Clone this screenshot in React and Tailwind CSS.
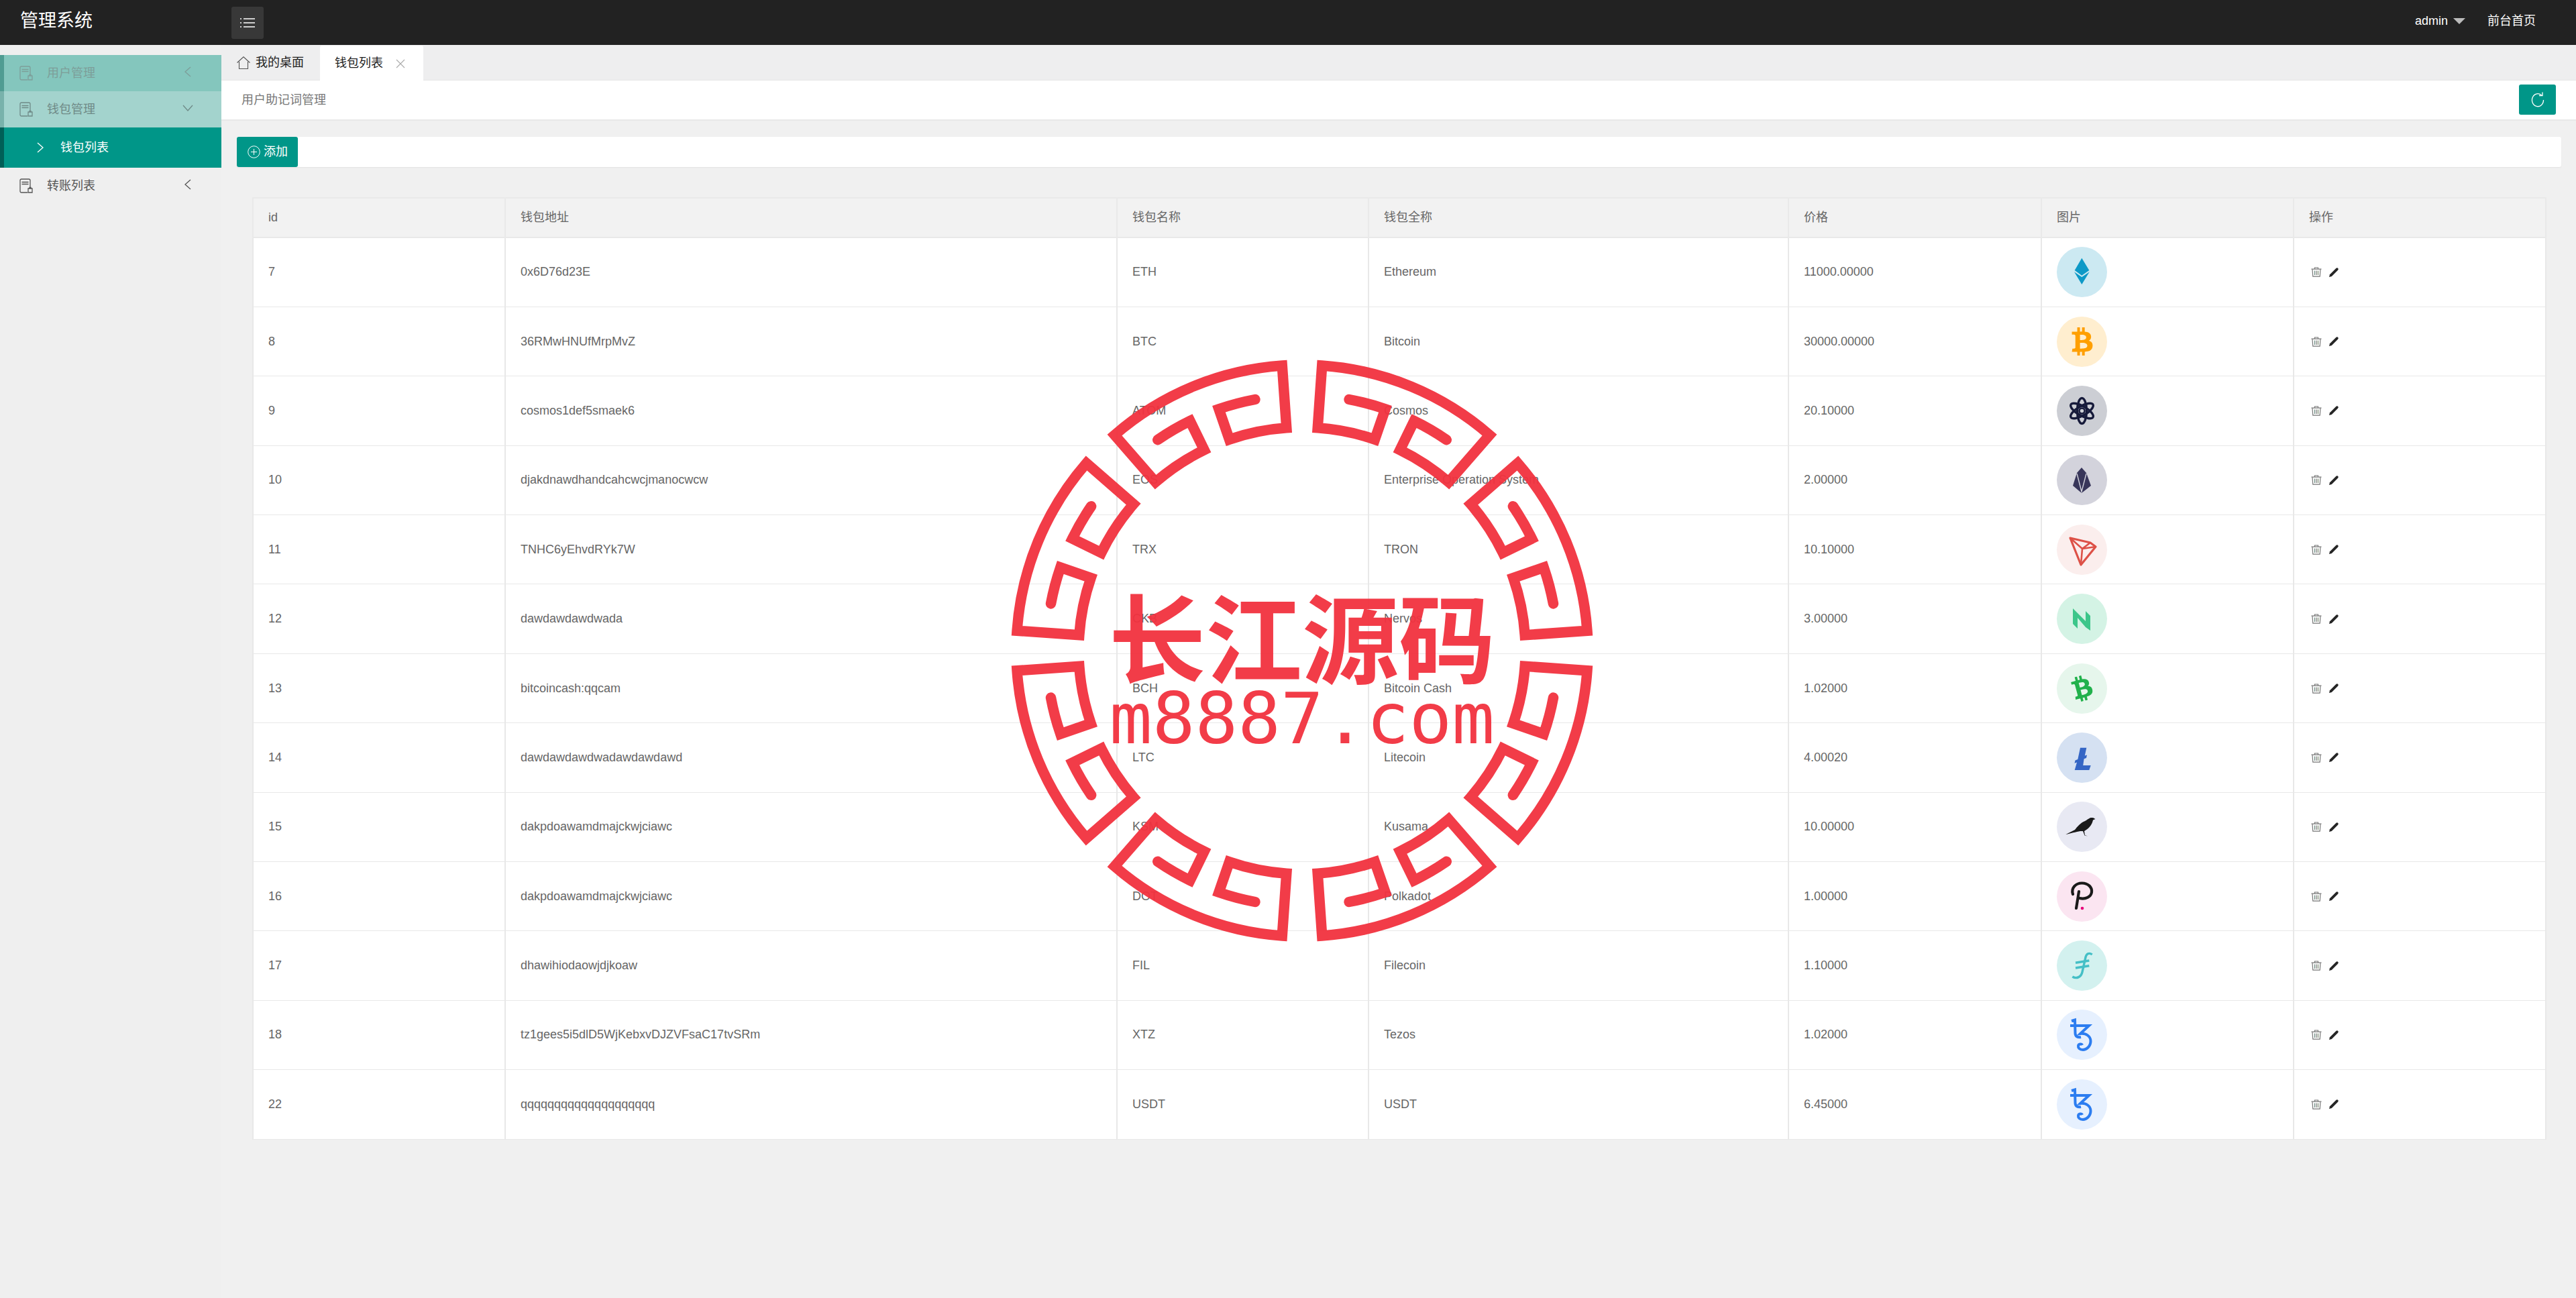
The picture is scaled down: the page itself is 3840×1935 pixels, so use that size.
import React from 'react';
import { FaBtc } from 'react-icons/fa';

const FONT = "font-['Liberation_Sans','Noto_Sans_CJK_SC',sans-serif]";

function CoinGlyph({ name }) {
  switch (name) {
    case 'ETH':
      return (
        <svg viewBox="0 0 75 75" className="w-full h-full">
          <path d="M37.3 16.7 48.3 35 37.3 42.7 26.7 35Z" fill="#0d99c7" />
          <path d="M26 37.3 37.3 45 48.7 37.3 37.3 56Z" fill="#0d99c7" />
        </svg>
      );
    case 'ATOM':
      return (
        <svg viewBox="0 0 75 75" className="w-full h-full" fill="none" stroke="#161a3a" strokeWidth="3.4">
          <ellipse cx="37.5" cy="37.5" rx="7" ry="19" />
          <ellipse cx="37.5" cy="37.5" rx="7" ry="19" transform="rotate(60 37.5 37.5)" />
          <ellipse cx="37.5" cy="37.5" rx="7" ry="19" transform="rotate(-60 37.5 37.5)" />
          <circle cx="37.5" cy="37.5" r="4" fill="#ccced4" strokeWidth="2.5" />
        </svg>
      );
    case 'EOS':
      return (
        <svg viewBox="0 0 75 75" className="w-full h-full">
          <path d="M37 19 44 27 51 46 37 57 24 46 30 27Z" fill="#38365a" />
          <path d="M30 28 37 55 44 28" fill="none" stroke="#d3d3dc" strokeWidth="1.4" />
        </svg>
      );
    case 'TRX':
      return (
        <svg viewBox="0 0 75 75" className="w-full h-full" fill="none" stroke="#dd5147" strokeWidth="3.2" strokeLinejoin="round">
          <path d="M20 20 50 27 58 33 36 60Z" />
          <path d="M20 20 38 36 36 60M38 36 50 27M38 36 58 33" strokeWidth="2.6" />
        </svg>
      );
    case 'CKB':
      return (
        <svg viewBox="0 0 75 75" className="w-full h-full">
          <path d="M24 22 24 45 31 52 31 36 43 50 50 55 50 33 43 26 43 41Z" fill="#3cc68a" />
        </svg>
      );
    case 'LTC':
      return (
        <svg viewBox="0 0 75 75" className="w-full h-full">
          <path d="M35 22.7 44.3 22.7 41.8 34.5 45 33.5 44 38 40.6 39.3 39.2 49 50.7 49 48.3 56 26.7 56 30 44.5 26.5 45.8 27.5 41.5 31.3 40Z" fill="#3566c5" />
        </svg>
      );
    case 'KSM':
      return (
        <svg viewBox="0 0 75 75" className="w-full h-full">
          <path d="M13.3 49 27 42C30 38 36 31 42 29 47 26 49 24 52 24 55 23.5 56 25 57.5 26L54 27.5C53 33 49 39 44 42L41 44 42 50 46 51.5 41.5 50.5 39 44 35 44C29 45 20 47.5 13.3 49Z" fill="#1a1a1a" />
        </svg>
      );
    case 'DOT':
      return (
        <svg viewBox="0 0 75 75" className="w-full h-full" fill="none" stroke="#1a1a1a" strokeWidth="4.2" strokeLinecap="round">
          <path d="M24 34C21 25 28 17.5 37.5 17.5 47 17.5 53 24 52 31 51 38 43 42 34 40" />
          <path d="M33 30 29 55" />
          <circle cx="38" cy="55" r="2.3" fill="#e6007a" stroke="none" />
        </svg>
      );
    case 'FIL':
      return (
        <svg viewBox="0 0 75 75" className="w-full h-full" fill="none" stroke="#45bfc6" strokeWidth="3.4">
          <path d="M52.7 21C48 17.5 44 20 43 25L38 47C36.5 54 30 58 23.3 54" />
          <path d="M28 33.3 48.3 30M28 41 48.3 37.7" />
        </svg>
      );
    case 'XTZ':
      return (
        <svg viewBox="0 0 75 75" className="w-full h-full" fill="none" stroke="#2c7df0" strokeWidth="4">
          <path d="M22 17 27 15.5 27.5 35C27.5 40 31 42 36 41" />
          <path d="M20 24H48L35 36C44 35 50.5 40 50.5 47 50.5 55 44 60 39 60 34 60 31.5 57 32 54 32.5 51 37 50.5 38 53" />
        </svg>
      );
    case 'BTC':
      return (
        <div className="w-full h-full flex items-center justify-center">
          <FaBtc size={42} color="#ff9f00" />
        </div>
      );
    case 'BCH':
      return (
        <div className="w-full h-full flex items-center justify-center">
          <FaBtc size={38} color="#22b14c" className="-rotate-[15deg]" />
        </div>
      );
    default:
      return null;
  }
}

const rows = [
  { id: 7, addr: '0x6D76d23E', sym: 'ETH', name: 'Ethereum', price: '11000.00000', bg: 'bg-[#cce9f2]' },
  { id: 8, addr: '36RMwHNUfMrpMvZ', sym: 'BTC', name: 'Bitcoin', price: '30000.00000', bg: 'bg-[#ffeecf]' },
  { id: 9, addr: 'cosmos1def5smaek6', sym: 'ATOM', name: 'Cosmos', price: '20.10000', bg: 'bg-[#ccced4]' },
  { id: 10, addr: 'djakdnawdhandcahcwcjmanocwcw', sym: 'EOS', name: 'Enterprise Operation System', price: '2.00000', bg: 'bg-[#d3d3dc]' },
  { id: 11, addr: 'TNHC6yEhvdRYk7W', sym: 'TRX', name: 'TRON', price: '10.10000', bg: 'bg-[#fbeeed]' },
  { id: 12, addr: 'dawdawdawdwada', sym: 'CKB', name: 'Nervos', price: '3.00000', bg: 'bg-[#d4f3e5]' },
  { id: 13, addr: 'bitcoincash:qqcam', sym: 'BCH', name: 'Bitcoin Cash', price: '1.02000', bg: 'bg-[#e6f6ec]' },
  { id: 14, addr: 'dawdawdawdwadawdawdawd', sym: 'LTC', name: 'Litecoin', price: '4.00020', bg: 'bg-[#d5e1f2]' },
  { id: 15, addr: 'dakpdoawamdmajckwjciawc', sym: 'KSM', name: 'Kusama', price: '10.00000', bg: 'bg-[#e8e9f3]' },
  { id: 16, addr: 'dakpdoawamdmajckwjciawc', sym: 'DOT', name: 'Polkadot', price: '1.00000', bg: 'bg-[#fbe5f1]' },
  { id: 17, addr: 'dhawihiodaowjdjkoaw', sym: 'FIL', name: 'Filecoin', price: '1.10000', bg: 'bg-[#d3f1ef]' },
  { id: 18, addr: 'tz1gees5i5dlD5WjKebxvDJZVFsaC17tvSRm', sym: 'XTZ', name: 'Tezos', price: '1.02000', bg: 'bg-[#e6f0fe]' },
  { id: 22, addr: 'qqqqqqqqqqqqqqqqqqqq', sym: 'USDT', glyph: 'XTZ', name: 'USDT', price: '6.45000', bg: 'bg-[#e6f0fe]' },
];

const columns = [
  { label: 'id', w: 'w-[376px]' },
  { label: '钱包地址', w: 'w-[912px]' },
  { label: '钱包名称', w: 'w-[375px]' },
  { label: '钱包全称', w: 'w-[626px]' },
  { label: '价格', w: 'w-[377px]' },
  { label: '图片', w: 'w-[376px]' },
  { label: '操作', w: 'w-[376px]' },
];

const TrashIcon = () => (
  <svg width="16" height="15" viewBox="0 0 16 15" fill="none">
    <path d="M0.5 3.2H15.5M5.5 3V1H10.5V3" stroke="#777" strokeWidth="1.2" />
    <path d="M2 3.5 2.8 14.2H13.2L14 3.5" stroke="#777" strokeWidth="1.2" />
    <path d="M5.5 5.5V12" stroke="#6b8a80" strokeWidth="1.2" />
    <path d="M8 5.5V12" stroke="#777" strokeWidth="1.2" />
    <path d="M10.5 5.5V12" stroke="#7a8a70" strokeWidth="1.2" />
  </svg>
);

const PencilIcon = () => (
  <svg width="14" height="14" viewBox="0 0 14 14">
    <path d="M0 14 1 10.2 10 1.2 12 0 14 2 12.8 4 3.8 13Z" fill="#262626" />
  </svg>
);

const DocIcon = ({ color }) => (
  <svg width="20" height="22" viewBox="0 0 20 22" fill="none" stroke={color} strokeWidth="1.3">
    <path d="M12 21H3C1.8 21 1 20.2 1 19V3C1 1.8 1.8 1 3 1H14C15.2 1 16 1.8 16 3V13" />
    <path d="M3.5 5.5H13.5M3.5 8.5H13.5" />
    <path d="M13 15H19V21H13ZM15 15V13.5H17V15" />
  </svg>
);

const Chevron = ({ dir, color }) => {
  if (dir === 'down') {
    return (
      <svg width="16" height="10" viewBox="0 0 16 10" fill="none" stroke={color} strokeWidth="1.3">
        <path d="M1 1 8 9 15 1" />
      </svg>
    );
  }
  return (
    <svg width="10" height="16" viewBox="0 0 10 16" fill="none" stroke={color} strokeWidth="1.3">
      <path d={dir === 'left' ? 'M9 1 1 8 9 15' : 'M1 1 9 8 1 15'} />
    </svg>
  );
};

function SideItem({ label, chevron, rowClass, barClass, textClass, iconColor, chevronColor }) {
  return (
    <div className={`h-[54px] flex items-center ${rowClass}`}>
      <div className={`w-[6px] h-full shrink-0 ${barClass}`} />
      <div className="ml-[23px] w-[20px] shrink-0 flex">
        <DocIcon color={iconColor} />
      </div>
      <span className={`ml-[21px] text-[18px] ${textClass}`}>{label}</span>
      <div className="ml-auto mr-[25px] w-[50px] flex justify-center -translate-y-[2px]">
        <Chevron dir={chevron} color={chevronColor} />
      </div>
    </div>
  );
}

// one key-pattern piece of the stamp ring, built from polar points
function polar(r, deg) {
  const a = ((deg - 90) * Math.PI) / 180;
  return `${(434 + r * Math.cos(a)).toFixed(2)} ${(434 + r * Math.sin(a)).toFixed(2)}`;
}

function ringPiece(c) {
  const R1 = 426;
  const R2 = 381;
  const R3 = 333;
  const arc = (r, from, to) => `A${r} ${r} 0 0 ${to > from ? 1 : 0} ${polar(r, c + to)}`;
  return [
    `M${polar(R2, c + 11.9)}`,
    arc(R2, 11.9, 3.5),
    `L${polar(R3, c + 3.5)}`,
    arc(R3, 3.5, 18.5),
    `L${polar(R1, c + 18.5)}`,
    arc(R1, 18.5, -18.5),
    `L${polar(R3, c - 18.5)}`,
    arc(R3, -18.5, -3.5),
    `L${polar(R2, c - 3.5)}`,
    arc(R2, -3.5, -11.9),
  ].join(' ');
}

const ringCentres = [22.5, 67.5, 112.5, 157.5, 202.5, 247.5, 292.5, 337.5];

function Stamp() {
  return (
    <div className="absolute left-[1507px] top-[536px] w-[868px] h-[868px] pointer-events-none opacity-95">
      <svg width="868" height="868" viewBox="0 0 868 868" fill="none" stroke="#f2323f" strokeWidth="15.5" strokeLinejoin="miter" strokeLinecap="round">
        {ringCentres.map((c) => (
          <path key={c} d={ringPiece(c)} />
        ))}
      </svg>
      <div className="absolute inset-x-0 top-[324px] flex justify-center text-[#f2323f] text-[144px] leading-[170px] font-bold font-['Noto_Sans_CJK_SC',sans-serif]">
        长江源码
      </div>
      <div className="absolute inset-x-0 top-[474px] flex justify-center text-[#f2323f] text-[106px] leading-[124px] font-['DejaVu_Sans_Mono',monospace]">
        m8887.com
      </div>
    </div>
  );
}

export default function App() {
  return (
    <div className={`relative w-full h-[1935px] overflow-hidden flex flex-col bg-[#f0f0f0] text-[18px] ${FONT}`}>
      {/* Top bar */}
      <header className="h-[67px] shrink-0 bg-[#222222] flex items-center text-white">
        <div className="w-[345px] pl-[30px] text-[27px] leading-none -translate-y-[2px]">管理系统</div>
        <button className="w-[48px] h-[48px] rounded-[3px] bg-[#383838] flex items-center justify-center">
          <svg width="22" height="14" viewBox="0 0 22 14" fill="none" stroke="white" strokeWidth="1.6">
            <path d="M0 1H2M5 1H22M0 7H2M5 7H22M0 13H2M5 13H22" />
          </svg>
        </button>
        <div className="ml-auto flex items-center pr-[60px] -translate-y-[2px]">
          <span>admin</span>
          <span className="ml-[8px] w-0 h-0 border-x-[9px] border-x-transparent border-t-[9px] border-t-[#bbbbbb]" />
          <span className="ml-[33px]">前台首页</span>
        </div>
      </header>

      <div className="flex flex-1 min-h-0">
        {/* Sidebar */}
        <aside className="w-[330px] shrink-0 pt-[15px] bg-[#efefef]">
          <SideItem label="用户管理" chevron="left" rowClass="bg-[#84c6bd]" barClass="bg-[#4f9c92]" textClass="text-[#7d9e99]" iconColor="#7d9e99" chevronColor="#7d9e99" />
          <SideItem label="钱包管理" chevron="down" rowClass="bg-[#a3d3cd]" barClass="bg-[#78b2ab]" textClass="text-[#6f8a87]" iconColor="#6f8a87" chevronColor="#6f8a87" />
          <div className="h-[60px] flex items-center bg-[#009688] text-white">
            <div className="w-[6px] h-full shrink-0 bg-[#005f57]" />
            <div className="ml-[49px] flex">
              <Chevron dir="right" color="#ffffff" />
            </div>
            <span className="ml-[25px]">钱包列表</span>
          </div>
          <SideItem label="转账列表" chevron="left" rowClass="" barClass="" textClass="text-[#555555]" iconColor="#555555" chevronColor="#555555" />
        </aside>

        <main className="flex-1 min-w-0">
          {/* Tabs */}
          <div className="h-[53px] flex bg-[#eeeeef] border-b border-[#e6e6e6] text-[#222222]">
            <div className="w-[147px] flex items-center pl-[23px]">
              <svg width="20" height="19" viewBox="0 0 20 19" fill="none" stroke="#555555" strokeWidth="1.1">
                <path d="M0.5 9.5 10 0.8 19.5 9.5M3.5 8V18.5H16.5V8" />
              </svg>
              <span className="ml-[8px]">我的桌面</span>
            </div>
            <div className="w-[154px] h-[53px] mt-[1px] flex items-center pl-[22px] bg-white rounded-t-[3px]">
              <span>钱包列表</span>
              <svg className="ml-[19px]" width="14" height="14" viewBox="0 0 14 14" fill="none" stroke="#aaaaaa" strokeWidth="1.1">
                <path d="M1 1 13 13M13 1 1 13" />
              </svg>
            </div>
          </div>

          {/* Breadcrumb */}
          <div className="h-[60px] flex items-center justify-between bg-white border-b-2 border-[#e8e8e8] pl-[30px] pr-[30px]">
            <span className="text-[#777777]">用户助记词管理</span>
            <button className="w-[55px] h-[45px] rounded-[3px] bg-[#009688] flex items-center justify-center -translate-y-[1px]">
              <svg width="22" height="24" viewBox="0 0 22 24" fill="none" stroke="white" strokeWidth="1.3">
                <path d="M17 6.5A8.5 9.5 0 1 0 19.5 13" />
                <path d="M13 6.5H18V1.5" />
              </svg>
            </button>
          </div>

          {/* Toolbar */}
          <div className="mt-[24px] ml-[23px] mr-[22px] h-[45px] bg-white rounded-[3px] shadow-[0_1px_2px_rgba(0,0,0,0.06)]">
            <button className="w-[91px] h-[45px] rounded-[3px] bg-[#009688] text-white flex items-center pl-[16px]">
              <svg width="19" height="19" viewBox="0 0 19 19" fill="none" stroke="white" strokeWidth="1">
                <circle cx="9.5" cy="9.5" r="8.8" />
                <path d="M9.5 5V14M5 9.5H14" />
              </svg>
              <span className="ml-[5px]">添加</span>
            </button>
          </div>

          {/* Wallet table */}
          <table className="mt-[45px] ml-[46px] w-[3418px] table-fixed border-collapse bg-white text-[#666666] text-left">
            <colgroup>
              {columns.map((c) => (
                <col key={c.label} className={c.w} />
              ))}
            </colgroup>
            <thead>
              <tr className="h-[59px] bg-[#f2f2f2]">
                {columns.map((c) => (
                  <th key={c.label} className="px-[22px] font-normal border-2 border-[#e9e9e9]">
                    {c.label}
                  </th>
                ))}
              </tr>
            </thead>
            <tbody>
              {rows.map((r) => (
                <tr key={r.id} className="h-[103.4px]">
                  <td className="px-[22px] border-x-2 border-y border-[#e8e8e8]">{r.id}</td>
                  <td className="px-[22px] border-x-2 border-y border-[#e8e8e8]">{r.addr}</td>
                  <td className="px-[22px] border-x-2 border-y border-[#e8e8e8]">{r.sym}</td>
                  <td className="px-[22px] border-x-2 border-y border-[#e8e8e8]">{r.name}</td>
                  <td className="px-[22px] border-x-2 border-y border-[#e8e8e8]">{r.price}</td>
                  <td className="px-[22px] border-x-2 border-y border-[#e8e8e8]">
                    <div className={`w-[75px] h-[75px] rounded-full ${r.bg}`}>
                      <CoinGlyph name={r.glyph || r.sym} />
                    </div>
                  </td>
                  <td className="px-[25px] border-x-2 border-y border-[#e8e8e8]">
                    <div className="flex items-center gap-[11px]">
                      <TrashIcon />
                      <PencilIcon />
                    </div>
                  </td>
                </tr>
              ))}
            </tbody>
          </table>
        </main>
      </div>

      <Stamp />
    </div>
  );
}
